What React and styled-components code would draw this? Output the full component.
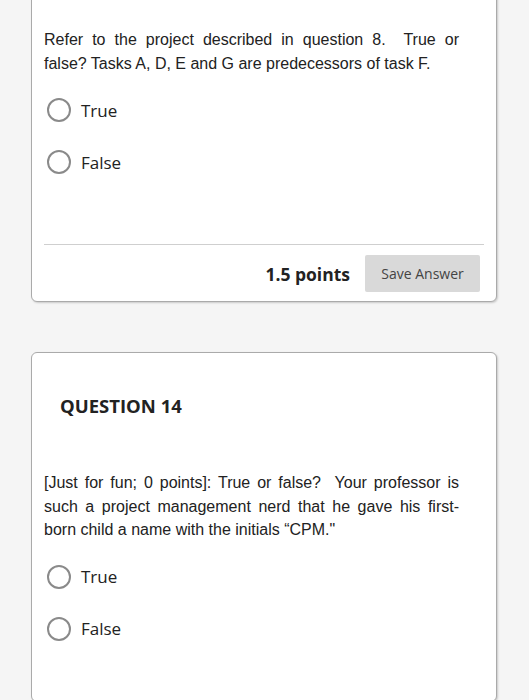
import React from "react";
import styled, { createGlobalStyle } from "styled-components";

const Global = createGlobalStyle`
  html, body { margin: 0; padding: 0; background: #f5f5f5; }
  body { overflow: hidden; }
`;

const Page = styled.div`
  width: 529px;
  height: 700px;
  overflow: hidden;
  background: #f5f5f5;
`;

const Column = styled.div`
  width: 466px;
  margin-left: 31px;
  display: flex;
  flex-direction: column;
  gap: 50px;
  margin-top: ${(p) => p.$offset}px;
`;

const Card = styled.div`
  background: #fff;
  border: 1px solid #aaa;
  border-radius: 6px;
  box-shadow: 1px 1px 2px rgba(0, 0, 0, 0.18);
  padding: ${(p) => p.$pad};
  display: flex;
  flex-direction: column;
`;

const QuestionTitle = styled.h2`
  margin: 0;
  padding-left: 16px;
  font-family: "Open Sans", sans-serif;
  font-weight: 700;
  font-size: 18.5px;
  line-height: 24px;
  color: #222;
`;

const Prompt = styled.p`
  margin: ${(p) => p.$margin || "0"};
  font-family: "Liberation Sans", Arial, sans-serif;
  font-size: 16px;
  line-height: ${(p) => p.$lh || 24}px;
  color: #222;
  text-align: justify;
  padding-right: 25px;
`;

const Options = styled.div`
  display: flex;
  flex-direction: column;
  gap: 28px;
  margin-top: ${(p) => p.$top}px;
  padding-left: 3px;
`;

const Option = styled.label`
  display: flex;
  align-items: center;
  gap: 10px;
  height: 24px;
  font-family: "Open Sans", sans-serif;
  font-size: 17px;
  color: #222;
`;

const Radio = styled.span`
  width: 20px;
  height: 20px;
  border: 2px solid #8a8a8a;
  border-radius: 50%;
  flex: none;
`;

const Divider = styled.hr`
  margin: 70px 0 0;
  border: none;
  border-top: 1px solid #cfcfcf;
`;

const Footer = styled.div`
  display: flex;
  justify-content: flex-end;
  align-items: center;
  gap: 15px;
  padding: 10px 4px 0 0;
`;

const Points = styled.span`
  font-family: "Open Sans", sans-serif;
  font-weight: 700;
  font-size: 17.5px;
  color: #222;
`;

const SaveButton = styled.button`
  width: 115px;
  height: 37px;
  border: none;
  border-radius: 2px;
  background: #d9d9d9;
  font-family: "Open Sans", sans-serif;
  font-size: 14px;
  color: #444;
  padding: 0;
`;

const Choice = ({ label }) => (
  <Option>
    <Radio />
    {label}
  </Option>
);

export default function App() {
  return (
    <Page>
      <Global />
      <Column $offset={-10}>
        <Card $pad="37px 12px 9px 12px">
          <Prompt>
            Refer to the project described in question 8.&nbsp; True or false? Tasks A, D, E and G are predecessors of task F.
          </Prompt>
          <Options $top={22}>
            <Choice label="True" />
            <Choice label="False" />
          </Options>
          <Divider />
          <Footer>
            <Points>1.5 points</Points>
            <SaveButton>Save Answer</SaveButton>
          </Footer>
        </Card>
        <Card $pad="41px 12px 60px 12px">
          <QuestionTitle>QUESTION 14</QuestionTitle>
          <Prompt $margin="53px 0 0" $lh={23.5}>
            [Just for fun; 0 points]: True or false?&nbsp; Your professor is such a project management nerd that he gave his first-born child a name with the initials “CPM."
          </Prompt>
          <Options $top={23}>
            <Choice label="True" />
            <Choice label="False" />
          </Options>
        </Card>
      </Column>
    </Page>
  );
}
